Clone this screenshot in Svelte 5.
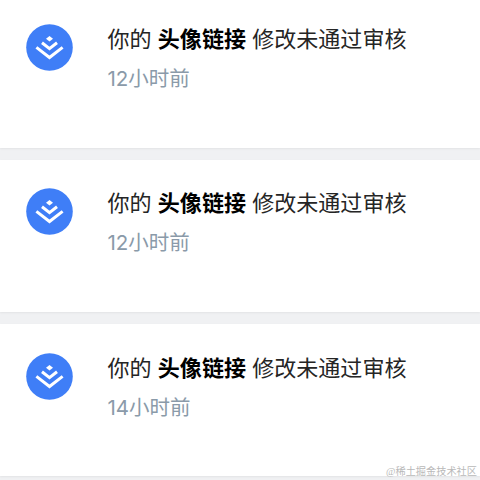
<script lang="ts">
	const notices = [
		{ id: 1, field: '头像链接', time: '12小时前' },
		{ id: 2, field: '头像链接', time: '12小时前' },
		{ id: 3, field: '头像链接', time: '14小时前' }
	];
</script>

<main class="feed">
	{#each notices as notice (notice.id)}
		<article class="card">
			<svg class="avatar" viewBox="0 0 47 47" fill="none">
				<circle cx="23.5" cy="23.5" r="23.3" fill="#3f7ef7" />
				<path d="M23.5 12l3.5 2.8-3.5 2.8-3.5-2.8z" fill="#fff" />
				<path d="M16 18.8l7.5 5.9 7.5-5.9M10.4 23.4l13.1 10.1 13.1-10.1" stroke="#fff" stroke-width="3" />
			</svg>
			<div class="body">
				<p class="title">你的 <strong>{notice.field}</strong> 修改未通过审核</p>
				<span class="time">{notice.time}</span>
			</div>
		</article>
	{/each}
	<span class="watermark">@稀土掘金技术社区</span>
</main>

<style>
	:global(body) {
		background: #f0f1f3;
	}
	.feed {
		position: relative;
		box-sizing: border-box;
		height: 480px;
		overflow: hidden;
		display: flex;
		flex-direction: column;
		gap: 12px;
		background: #f0f1f3;
		font-family: Inter, 'Noto Sans CJK SC', sans-serif;
	}
	.card {
		flex: none;
		box-sizing: border-box;
		height: 152.4px;
		padding: 28.8px 26px 0;
		display: flex;
		align-items: flex-start;
		gap: 34.5px;
		background: #fff;
		box-shadow: 0 1px 2px rgba(0, 0, 0, 0.06);
	}
	.card:first-child {
		height: 147.6px;
		padding-top: 24px;
	}
	.avatar {
		width: 47px;
		height: 47px;
		flex: none;
	}
	.body {
		display: flex;
		flex-direction: column;
	}
	.title {
		margin: 0;
		font-size: 22.05px;
		line-height: 30px;
		white-space: nowrap;
		color: #252525;
	}
	.title strong {
		font-weight: 700;
		color: #000;
	}
	.time {
		margin-top: 11px;
		font-size: 20.5px;
		line-height: 28px;
		color: #8a9aa9;
	}
	.watermark {
		position: absolute;
		right: 3px;
		bottom: 1px;
		font-family: 'Liberation Serif', 'Noto Sans CJK SC', serif;
		font-size: 10.2px;
		line-height: 14px;
		color: #b9b9b9;
	}
</style>
